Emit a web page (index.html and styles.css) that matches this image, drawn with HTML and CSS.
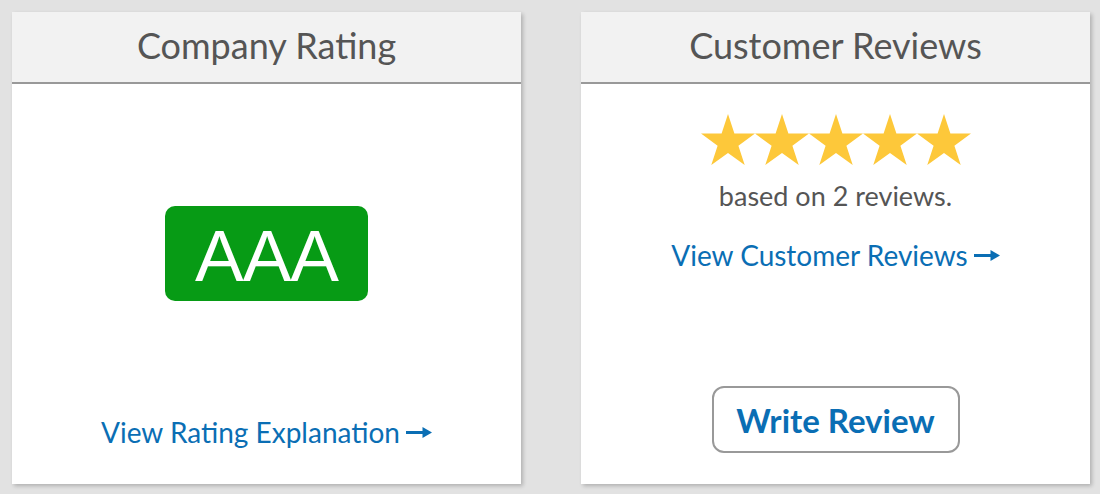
FILE: index.html
```html
<!DOCTYPE html>
<html>
<head>
<meta charset="utf-8">
<link rel="stylesheet" href="styles.css">
</head>
<body>
<div class="row">
  <section class="card">
    <header class="card-head">Company Rating</header>
    <div class="card-body">
      <div class="badge">AAA</div>
      <a class="link rating-link" href="#">View Rating Explanation<svg class="arrow" width="26" height="11" viewBox="0 0 26 11"><rect x="0" y="4" width="18" height="3" fill="currentColor"/><polygon points="16.5,0 26,5.5 16.5,11" fill="currentColor"/></svg></a>
    </div>
  </section>
  <section class="card">
    <header class="card-head">Customer Reviews</header>
    <div class="card-body">
      <div class="stars">
        <svg width="54" height="51" viewBox="0 0 54 51"><polygon fill="#fdc83a" points="27,0 33.4,19.4 54,19.6 37.4,31.7 43.7,51 27,39.1 10.3,51 16.6,31.7 0,19.6 20.6,19.4"/></svg><svg width="54" height="51" viewBox="0 0 54 51"><polygon fill="#fdc83a" points="27,0 33.4,19.4 54,19.6 37.4,31.7 43.7,51 27,39.1 10.3,51 16.6,31.7 0,19.6 20.6,19.4"/></svg><svg width="54" height="51" viewBox="0 0 54 51"><polygon fill="#fdc83a" points="27,0 33.4,19.4 54,19.6 37.4,31.7 43.7,51 27,39.1 10.3,51 16.6,31.7 0,19.6 20.6,19.4"/></svg><svg width="54" height="51" viewBox="0 0 54 51"><polygon fill="#fdc83a" points="27,0 33.4,19.4 54,19.6 37.4,31.7 43.7,51 27,39.1 10.3,51 16.6,31.7 0,19.6 20.6,19.4"/></svg><svg width="54" height="51" viewBox="0 0 54 51"><polygon fill="#fdc83a" points="27,0 33.4,19.4 54,19.6 37.4,31.7 43.7,51 27,39.1 10.3,51 16.6,31.7 0,19.6 20.6,19.4"/></svg>
      </div>
      <p class="based">based on 2 reviews.</p>
      <a class="link reviews-link" href="#">View Customer Reviews<svg class="arrow" width="26" height="11" viewBox="0 0 26 11"><rect x="0" y="4" width="18" height="3" fill="currentColor"/><polygon points="16.5,0 26,5.5 16.5,11" fill="currentColor"/></svg></a>
      <button class="write-btn">Write Review</button>
    </div>
  </section>
</div>
</body>
</html>
```
FILE: styles.css
```css
html, body {
  margin: 0;
  padding: 0;
  background: #e2e2e2;
  font-family: Lato, "Noto Sans", sans-serif;
}
.row {
  display: flex;
  gap: 60px;
  padding: 12px 10px 10px 12px;
}
.card {
  width: 509px;
  height: 472px;
  background: #fff;
  box-shadow: 2px 2px 4px rgba(0,0,0,0.22);
  display: flex;
  flex-direction: column;
}
.card-head {
  box-sizing: border-box;
  height: 72px;
  padding-bottom: 3px;
  background: #f2f2f2;
  border-bottom: 2px solid #999;
  color: #555;
  font-size: 36px;
  line-height: 67px;
  text-align: center;
}
.card-body {
  flex: 1;
  display: flex;
  flex-direction: column;
  align-items: center;
}
.badge {
  margin-top: 122px;
  width: 203px;
  height: 95px;
  overflow: hidden;
  border-radius: 10px;
  background: #079b15;
  color: #fff;
  font-family: "Liberation Sans", Arial, sans-serif;
  font-size: 73px;
  line-height: 99px;
  text-align: center;
  letter-spacing: -1px;
}
.link {
  color: #0a6eb4;
  text-decoration: none;
  font-size: 28px;
  line-height: 34px;
  display: flex;
  align-items: center;
  gap: 6px;
}
.rating-link {
  margin-top: 114px;
}
.stars {
  margin-top: 30px;
  display: flex;
  height: 51px;
}
.based {
  margin: 15px 0 0;
  color: #555;
  font-size: 27px;
  line-height: 32px;
}
.reviews-link {
  margin-top: 26px;
}
.write-btn {
  margin-top: 114px;
  width: 248px;
  height: 67px;
  border: 2px solid #999;
  border-radius: 12px;
  background: #fff;
  color: #0a6eb4;
  font-family: Lato, "Noto Sans", sans-serif;
  font-weight: bold;
  font-size: 33px;
  padding: 0;
}
```
